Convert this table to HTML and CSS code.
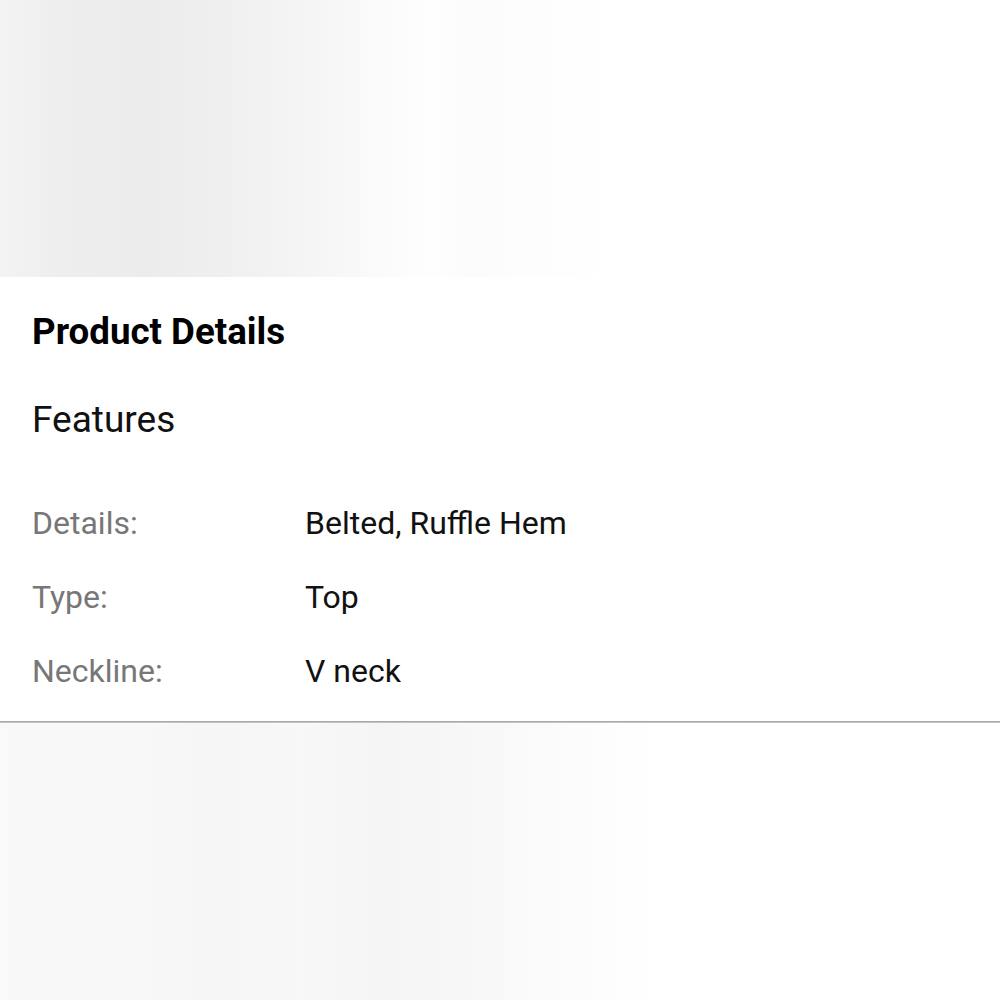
FILE: index.html
```html
<!DOCTYPE html>
<html lang="en">
<head>
<meta charset="utf-8">
<title>Product Details</title>
<link rel="stylesheet" href="styles.css">
</head>
<body>
<div class="hero hero-top"></div>
<section class="card">
  <h2 class="title">Product Details</h2>
  <h3 class="subtitle">Features</h3>
  <dl class="specs">
    <dt>Details:</dt><dd>Belted, Ruffle Hem</dd>
    <dt>Type:</dt><dd>Top</dd>
    <dt>Neckline:</dt><dd>V neck</dd>
  </dl>
</section>
<div class="hero hero-bottom"></div>
</body>
</html>
```
FILE: styles.css
```css
html, body {
  margin: 0;
  padding: 0;
  background: #fff;
  font-family: Roboto, "Liberation Sans", Arial, sans-serif;
}
.hero {
  width: 100%;
}
.hero-top {
  height: 277px;
  background:
    linear-gradient(to right, #f3f3f3 0px, #eeeeee 60px, #ececec 150px, #f0f0f0 230px, #f4f4f4 300px, #fafafa 370px, #fefefe 430px, rgba(255,255,255,0) 470px),
    linear-gradient(to right, #fcfcfc 0px, #fbfbfb 450px, #ffffff 620px);
}
.card {
  background: #fff;
  padding: 34px 32px 31px 32px;
  border-bottom: 1px solid #a9a9a9;
  box-shadow: 0 1px 0 #c4c4c4;
}
.title {
  margin: 0;
  font-size: 36.7px;
  font-weight: 700;
  line-height: 42px;
  color: #000;
}
.subtitle {
  margin: 46px 0 0;
  font-size: 37px;
  font-weight: 400;
  line-height: 42px;
  color: #111;
}
.specs {
  margin: 63px 0 0;
  display: grid;
  grid-template-columns: 273px 1fr;
  row-gap: 36px;
  font-size: 32px;
  line-height: 38px;
}
.specs dt {
  color: #777;
}
.specs dd {
  margin: 0;
  color: #111;
}
.hero-bottom {
  margin-top: 1px;
  height: 277px;
  background:
    linear-gradient(to right, #f9f9f9 0px, #f8f8f8 150px, #f6f6f6 210px, #f8f8f8 300px, #f5f5f5 380px, #f8f8f8 480px, #fcfcfc 580px, #ffffff 660px);
}
```
